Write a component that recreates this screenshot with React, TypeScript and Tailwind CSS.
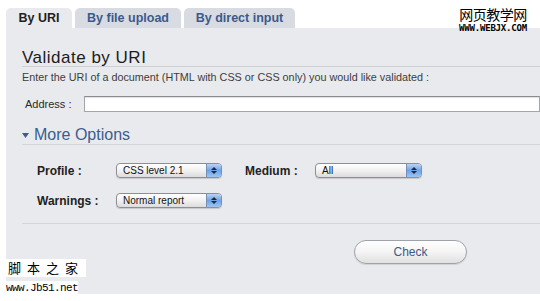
import React from 'react';

const Select = ({ value, width }: { value: string; width: string }) => (
  <div
    className={`${width} h-[15px] flex rounded-[4px] border border-[#8d8f94] bg-gradient-to-b from-white via-[#f1f1f1] to-[#dcdcdc] shadow-[0_1px_1px_rgba(0,0,0,0.15)] overflow-hidden`}
  >
    <span className="flex-1 pl-[6px] text-[10px] leading-[13px] text-[#111]">{value}</span>
    <span className="w-[15px] flex flex-col items-center justify-center gap-[1px] bg-gradient-to-b from-[#b9d4f3] via-[#6ea3e6] to-[#9cc5f2] border-l border-[#7590b8]">
      <svg width="6" height="3" viewBox="0 0 6 3"><path d="M0 3L3 0L6 3Z" fill="#1c2b44" /></svg>
      <svg width="6" height="3" viewBox="0 0 6 3"><path d="M0 0L3 3L6 0Z" fill="#1c2b44" /></svg>
    </span>
  </div>
);

export default function App() {
  const tabs = [
    { label: 'By URI', active: true, w: 'w-[66px]' },
    { label: 'By file upload', active: false, w: 'w-[106px]' },
    { label: 'By direct input', active: false, w: 'w-[111px]' },
  ];

  return (
    <div className="relative w-[540px] h-[301px] bg-white overflow-hidden font-['Liberation_Sans',Arial,sans-serif]">
      <div className="pt-[8px] pl-[6px]">
        {/* tabs */}
        <div className="flex gap-[3px] h-[20px]">
          {tabs.map((t) => (
            <div
              key={t.label}
              className={`${t.w} h-[20px] rounded-t-[5px] flex items-center justify-center text-[12.5px] font-bold ${
                t.active ? 'bg-[#e9eaed] text-[#1f1f1f]' : 'bg-[#d8dbe1] text-[#3b5a8c]'
              }`}
            >
              {t.label}
            </div>
          ))}
        </div>

        {/* panel */}
        <div className="h-[266px] bg-[#e9eaed] pl-[16px] pt-[20px]">
          <div className="h-[19px] leading-[19px] text-[17px] tracking-[0.5px] text-[#1c1c1c] border-b border-[#cdd0d5]">
            Validate by URI
          </div>
          <p className="mt-[4px] leading-[12px] text-[10.8px] text-[#3d3d3d]">
            Enter the URI of a document (HTML with CSS or CSS only) you would like validated :
          </p>

          <div className="mt-[13px] h-[16px] flex items-center">
            <span className="w-[62px] pl-[3px] text-[11px] text-[#2a2a2a]">Address :</span>
            <div className="flex-1 h-[16px] bg-white border border-[#a3a5aa] border-t-[#8a8c90] shadow-[inset_0_1px_1px_rgba(0,0,0,0.12)]" />
          </div>

          <div className="mt-[14px] h-[19px] flex items-center gap-[5px] border-b border-[#d3d5da] text-[#3b5d91]">
            <svg width="7" height="5" viewBox="0 0 7 5" className="mt-[1px]"><path d="M0 0H7L3.5 5Z" fill="#3b5d91" /></svg>
            <span className="text-[16px] leading-[18px]">More Options</span>
          </div>

          <div className="mt-[18px] h-[15px] flex items-center">
            <span className="w-[94px] pl-[15px] text-[12px] font-bold text-[#222]">Profile :</span>
            <Select value="CSS level 2.1" width="w-[106px]" />
            <span className="w-[93px] pl-[23px] text-[12px] font-bold text-[#222]">Medium :</span>
            <Select value="All" width="w-[107px]" />
          </div>

          <div className="mt-[15px] h-[15px] flex items-center">
            <span className="w-[94px] pl-[15px] text-[12px] font-bold text-[#222]">Warnings :</span>
            <Select value="Normal report" width="w-[106px]" />
          </div>

          <div className="mt-[15px] h-px bg-[#d3d5da]" />

          <button className="mt-[16px] ml-[332px] w-[113px] h-[24px] rounded-full border border-[#9fa2a8] bg-gradient-to-b from-white via-[#f4f4f4] to-[#e0e0e0] shadow-[0_1px_1px_rgba(0,0,0,0.1)] text-[12px] text-[#3b5a85]">
            Check
          </button>
        </div>
      </div>

      {/* watermarks */}
      <div className="absolute left-[457px] top-[6px] w-[72px] flex flex-col items-center">
        <span className="text-[14px] leading-[16px] text-black font-['Noto_Sans_CJK_SC',sans-serif] tracking-[-0.5px]">网页教学网</span>
        <span className="mt-[2px] text-[9px] leading-[9px] font-bold font-['DejaVu_Sans_Mono',monospace] text-black tracking-[-0.2px]">WWW.WEBJX.COM</span>
      </div>
      <div className="absolute left-[6px] top-[259px] flex flex-col items-start">
        <span className="bg-white px-[2px] text-[13px] leading-[18px] tracking-[6px] text-black font-['Noto_Sans_CJK_SC',sans-serif]">脚本之家</span>
        <span className="mt-[4px] bg-white text-[11px] leading-[14px] text-black font-['Liberation_Mono',monospace] tracking-[-0.6px]">www.Jb51.net</span>
      </div>
    </div>
  );
}
